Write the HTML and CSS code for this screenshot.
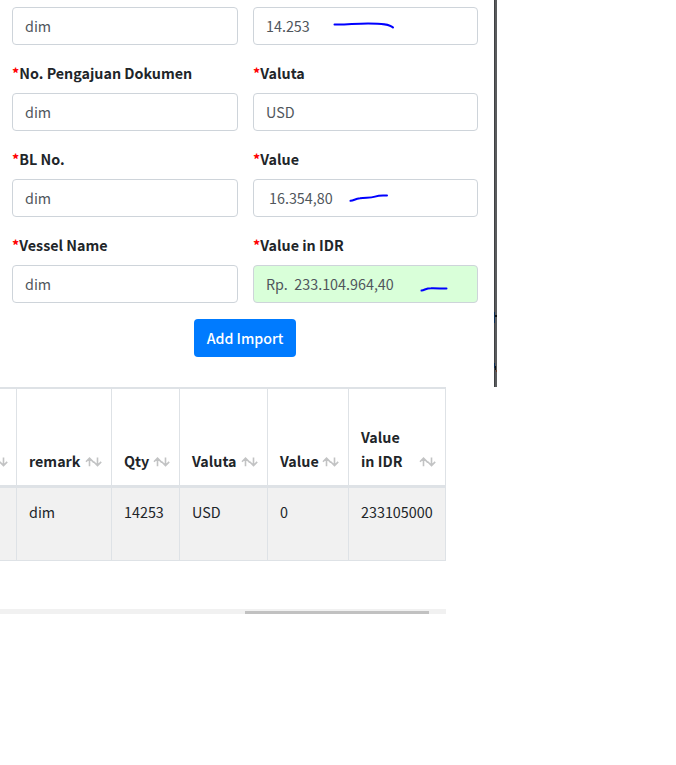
FILE: index.html
```html
<!DOCTYPE html>
<html lang="id">
<head>
<meta charset="utf-8">
<title>Add Import</title>
<link rel="stylesheet" href="styles.css">
</head>
<body>
<svg class="symbols" aria-hidden="true">
  <symbol id="sort" viewBox="0 0 17 10"><path d="M4.5 9.2V1M1 4.7L4.5 1.2L8.7 5.4M12.5 .5V8.7M8.7 4.8L12.5 8.6L16.2 4.9"/></symbol>
</svg>
<main class="modal">
  <form class="form">
    <div class="field"><input class="control" aria-label="Document" value="dim"></div>
    <div class="field"><input class="control" aria-label="Quantity" value="14.253">
      <svg class="ink ink-qty" viewBox="0 0 62 10"><path d="M1.5 4.5C12 5 22 3.4 35 3.4C48 3.5 57 4 60 7.5"/></svg></div>
    <div class="field"><label class="label" for="doc"><span class="required">*</span>No. Pengajuan Dokumen</label><input class="control" id="doc" value="dim"></div>
    <div class="field"><label class="label" for="valuta"><span class="required">*</span>Valuta</label><input class="control" id="valuta" value="USD"></div>
    <div class="field"><label class="label" for="bl"><span class="required">*</span>BL No.</label><input class="control" id="bl" value="dim"></div>
    <div class="field"><label class="label" for="value"><span class="required">*</span>Value</label><input class="control control-amount" id="value" value="16.354,80">
      <svg class="ink ink-value" viewBox="0 0 40 10"><path d="M1.5 7.8C5 7.5 6 5.8 11 5.2C17 4.3 21 5.2 26 3.6C31 2 34 2.6 38 2.6"/></svg></div>
    <div class="field"><label class="label" for="vessel"><span class="required">*</span>Vessel Name</label><input class="control" id="vessel" value="dim"></div>
    <div class="field"><label class="label" for="idr"><span class="required">*</span>Value in IDR</label><input class="control control-total" id="idr" value="Rp.&nbsp; 233.104.964,40">
      <svg class="ink ink-idr" viewBox="0 0 28 8"><path d="M1.5 5.6C5 5 6 3.2 11 3.2C17 3 21 3.6 26.5 3.6"/></svg></div>
    <button class="button" type="button">Add Import</button>
  </form>
  <svg class="backdrop" viewBox="0 0 3 387">
    <path fill="#5a5c5e" d="M0 0h3v387H0z"/>
    <path fill="#3f4143" d="M0 0h1v387H0z"/>
    <path fill="#0b2c52" d="M0 312h1v11H0zM0 363h1v5H0z"/>
    <path fill="#111" d="M1 315h2v2H1zM1 366h1v4H1z"/>
    <path fill="#6b3a26" d="M2 370h1v2H2z"/>
  </svg>
</main>
<section class="table">
  <div class="row head">
    <div class="cell cut"><svg class="sort"><use href="#sort"/></svg></div>
    <div class="cell"><span>remark</span><svg class="sort"><use href="#sort"/></svg></div>
    <div class="cell"><span>Qty</span><svg class="sort"><use href="#sort"/></svg></div>
    <div class="cell"><span>Valuta</span><svg class="sort"><use href="#sort"/></svg></div>
    <div class="cell"><span>Value</span><svg class="sort"><use href="#sort"/></svg></div>
    <div class="cell"><span>Value<br>in IDR</span><svg class="sort"><use href="#sort"/></svg></div>
  </div>
  <div class="row body">
    <div class="cell cut"></div>
    <div class="cell">dim</div>
    <div class="cell">14253</div>
    <div class="cell">USD</div>
    <div class="cell">0</div>
    <div class="cell">233105000</div>
  </div>
</section>
<div class="scrollbar"><div class="thumb"></div></div>
</body>
</html>
```
FILE: styles.css
```css
* { box-sizing: border-box; }
body {
  margin: 0;
  background: #fff;
  color: #212529;
  font: 14.35px/24px "Noto Sans CJK SC", "Open Sans", sans-serif;
  overflow: hidden;
}
.symbols { display: none; }
.modal { display: flex; width: 497px; height: 387px; }
.form {
  flex: 1;
  display: grid;
  grid-template-columns: 226px 225px;
  column-gap: 15px;
  row-gap: 16px;
  align-content: start;
  padding: 7px 0 0 12px;
}
.field { position: relative; }
.label { display: block; margin-bottom: 8px; font-weight: 700; font-size: 14.3px; white-space: nowrap; }
.required { color: #f00; }
.control {
  display: block;
  width: 100%;
  height: 38px;
  padding: 5px 12px 7px;
  border: 1px solid #ced4da;
  border-radius: 4px;
  background: #fff;
  color: #50565c;
  font: inherit;
}
.control-amount { padding-left: 15px; }
.control-total { background: #d9ffd9; }
.ink { position: absolute; fill: none; stroke: #00f; stroke-width: 2; stroke-linecap: round; }
.ink-qty { left: 80px; top: 13px; width: 62px; height: 10px; }
.ink-value { left: 96px; bottom: 14px; width: 40px; height: 10px; }
.ink-idr { left: 167px; bottom: 10px; width: 28px; height: 8px; }
.button {
  grid-column: 1 / -1;
  justify-self: center;
  width: 102px;
  height: 38px;
  padding: 0;
  border: 0;
  border-radius: 4px;
  background: #007bff;
  color: #fff;
  font: inherit;
  font-weight: 500;
  font-size: 14.2px;
}
.backdrop { display: block; width: 3px; height: 387px; }
.table { width: 446px; border-top: 2px solid #dee2e6; border-bottom: 1px solid #dee2e6; }
.row { display: grid; grid-template-columns: 17px 95px 68px 88px 81px 97px; }
.cell { padding: 12px; border-right: 1px solid #dee2e6; white-space: nowrap; }
.head { height: 99px; border-bottom: 3px solid #dee2e6; font-weight: 700; font-size: 14.3px; }
.head .cell { display: flex; justify-content: space-between; align-items: flex-end; padding-right: 9px; }
.row .cut { padding-left: 0; padding-right: 8px; justify-content: flex-end; }
.sort { flex: none; width: 17px; height: 10px; margin-bottom: 6px; fill: none; stroke: #c2c3c4; stroke-width: 1.6; }
.body { height: 72px; background: #f1f1f1; }
.scrollbar { width: 446px; height: 5px; margin-top: 48px; padding: 2px 0 0 245px; background: #f1f1f1; }
.thumb { width: 184px; height: 3px; background: #c1c1c1; }
```
